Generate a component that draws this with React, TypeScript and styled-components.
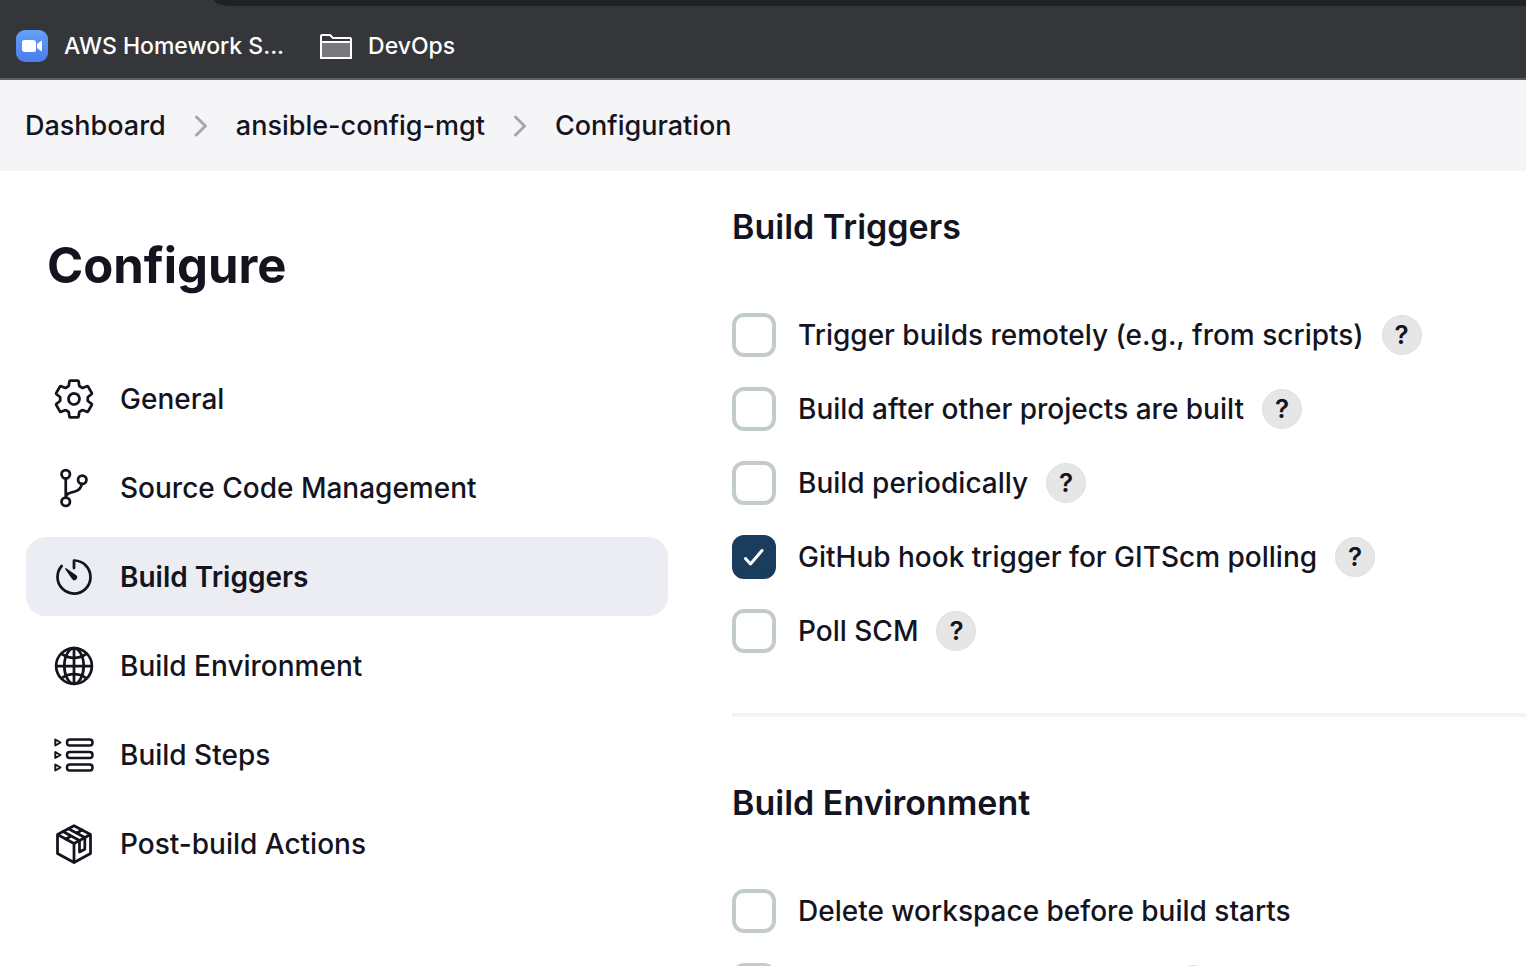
import React, { useState } from "react";
import styled, { createGlobalStyle } from "styled-components";
import { IoSettingsOutline, IoTimerOutline, IoGlobeOutline } from "react-icons/io5";

const ink = "#14141f";

const GlobalStyle = createGlobalStyle`
  *, *::before, *::after { box-sizing: border-box; }
  body {
    margin: 0;
    background: #fff;
    color: ${ink};
    font-family: Inter, "Liberation Sans", sans-serif;
    font-size: 28px;
    font-weight: 500;
    line-height: 32px;
  }
  a { color: inherit; text-decoration: none; }
`;

const Shell = styled.div`
  display: flex;
  flex-direction: column;
  height: 100vh;
  overflow: hidden;
`;

const BrowserBar = styled.header`
  flex: none;
  background: #35363a;
  border-bottom: 2px solid #5d5e62;
`;

const TabStrip = styled.div`
  height: 6px;
  margin-left: 214px;
  background: #202124;
  border-bottom-left-radius: 18px 6px;
`;

const Bookmarks = styled.nav`
  display: flex;
  align-items: center;
  gap: 36px;
  height: 72px;
  padding: 8px 16px 0;
`;

const Bookmark = styled.a`
  display: flex;
  align-items: center;
  gap: 16px;
  color: #fff;
  font-size: 23px;
  white-space: nowrap;
  svg { flex: none; }
`;

const Breadcrumbs = styled.nav`
  flex: none;
  padding: 0 25px;
  background: #f5f5f8;
  font-size: 27px;
`;

const CrumbList = styled.ol`
  display: flex;
  align-items: center;
  gap: 29px;
  height: 91px;
  margin: 0;
  padding: 0;
  list-style: none;
`;

const Crumb = styled.li`
  display: flex;
  align-items: center;
  gap: 29px;
`;

const Body = styled.div`
  flex: 1;
  display: grid;
  grid-template-columns: 668px minmax(0, 1fr);
  column-gap: 64px;
  min-height: 0;
`;

const Sidebar = styled.aside`
  padding: 64px 0 0 26px;
`;

const Title = styled.h1`
  margin: 0 0 62px 21px;
  font-size: 49px;
  font-weight: 700;
  line-height: 62px;
`;

const SideNav = styled.nav`
  display: flex;
  flex-direction: column;
  gap: 10px;
`;

const SideLink = styled.a<{ $active?: boolean }>`
  display: flex;
  align-items: center;
  gap: 24px;
  min-height: 79px;
  padding: 0 26px;
  border-radius: 20px;
  background: ${(p) => (p.$active ? "#ecedf3" : "transparent")};
  font-weight: ${(p) => (p.$active ? 600 : 500)};
  svg { flex: none; }
`;

const Main = styled.main`
  padding-top: 32px;
`;

const Section = styled.section`
  & + & {
    margin-top: 60px;
    padding-top: 62px;
    border-top: 4px solid #f3f3f7;
  }
`;

const SectionTitle = styled.h2`
  margin: 0 0 62px;
  font-size: 34px;
  font-weight: 600;
  line-height: 48px;
`;

const OptionList = styled.div`
  display: flex;
  flex-direction: column;
  gap: 30px;
`;

const Option = styled.div`
  display: flex;
  align-items: center;
  gap: 18px;
  height: 44px;
`;

const OptionLabel = styled.label`
  display: flex;
  align-items: center;
  gap: 22px;
  white-space: nowrap;
`;

const CheckCell = styled.span`
  display: grid;
  flex: none;
  & > * { grid-area: 1 / 1; }
  svg { pointer-events: none; }
`;

const Checkbox = styled.input`
  appearance: none;
  width: 44px;
  height: 44px;
  margin: 0;
  border: 4px solid #c3cbcf;
  border-radius: 12px;
  background: #fff;
  &:checked {
    border-color: #1a3d5d;
    background: #1a3d5d;
  }
`;

const HelpButton = styled.button`
  display: grid;
  place-items: center;
  width: 40px;
  height: 40px;
  padding: 0;
  border: 1px solid #e0e0e0;
  border-radius: 50%;
  background: #e6e6e6;
  color: ${ink};
  font: 600 26px/30px Inter, "Liberation Sans", sans-serif;
`;

const VideoLogo = () => (
  <svg width="32" height="32" viewBox="0 0 32 32" aria-hidden="true">
    <defs>
      <linearGradient id="video" x1="0" y1="0" x2="0" y2="1">
        <stop offset="0" stopColor="#64a0f8" />
        <stop offset="1" stopColor="#4a7cf0" />
      </linearGradient>
    </defs>
    <rect width="32" height="32" rx="9" fill="url(#video)" />
    <path d="M6 12q0-2 2-2h9q3 0 3 3v7q0 2-2 2H9q-3 0-3-3zM21 14l4-3q1-.6 1 .5v9q0 1-1 .5l-4-3z" fill="#fff" />
  </svg>
);

const FolderIcon = () => (
  <svg width="32" height="25" viewBox="0 0 32 25" aria-hidden="true">
    <path d="M2 9h28v14H2z" fill="#77787a" />
    <path d="M1 24V2q0-1 1-1h8l3 3h17q1 0 1 1v19zM1 8h30" fill="none" stroke="#fff" strokeWidth="2" />
  </svg>
);

const Chevron = () => (
  <svg width="12" height="22" viewBox="0 0 12 22" fill="none" stroke="#a5a5b5" strokeWidth="3" strokeLinecap="round" strokeLinejoin="round" aria-hidden="true">
    <path d="M1.500 2l9 9-9 9" />
  </svg>
);

const LineIcon = ({ children }: { children: React.ReactNode }) => (
  <svg width="44" height="44" viewBox="0 0 44 44" fill="none" stroke="currentColor" strokeWidth="2.75" strokeLinecap="round" strokeLinejoin="round" aria-hidden="true">
    {children}
  </svg>
);

const BranchIcon = () => (
  <LineIcon>
    <circle cx="13.75" cy="8.25" r="4.2" />
    <circle cx="13.75" cy="35.75" r="4.2" />
    <circle cx="30.25" cy="13.75" r="4.2" />
    <path d="M13.75 12.5v19M29.8 18c-.8 4.500-2.600 6.300-6.800 7.500-4.500 1.300-9.250 1.800-9.250 6" />
  </LineIcon>
);

const StepsIcon = () => (
  <LineIcon>
    {[9.5, 22, 34.5].map((y) => (
      <g key={y} strokeWidth="2.500">
        <path d={`M3.300 ${y - 3}v6l5.200-3z`} strokeWidth="2" />
        <rect x="15" y={y - 3} width="25.500" height="6" rx="2.800" />
      </g>
    ))}
  </LineIcon>
);

const PackageIcon = () => (
  <LineIcon>
    <path d="M22 3.700 38.500 12.500v19L22 40.500 5.500 31.500v-19zM5.500 12.500 22 21.500l16.500-9M22 21.500v19" />
    <path d="M11 9.500l16.500 9v11.500l5.300-2.800V15.500L16.500 6.700M13.750 17l5.500-3M24.750 11l5.500-3" />
  </LineIcon>
);

const navItems = [
  { label: "General", icon: <IoSettingsOutline size={44} /> },
  { label: "Source Code Management", icon: <BranchIcon /> },
  { label: "Build Triggers", icon: <IoTimerOutline size={44} />, active: true },
  { label: "Build Environment", icon: <IoGlobeOutline size={44} /> },
  { label: "Build Steps", icon: <StepsIcon /> },
  { label: "Post-build Actions", icon: <PackageIcon /> },
];

type OptionData = { label: string; checked?: boolean; help?: boolean };

const sections: { title: string; options: OptionData[] }[] = [
  {
    title: "Build Triggers",
    options: [
      { label: "Trigger builds remotely (e.g., from scripts)", help: true },
      { label: "Build after other projects are built", help: true },
      { label: "Build periodically", help: true },
      { label: "GitHub hook trigger for GITScm polling", checked: true, help: true },
      { label: "Poll SCM", help: true },
    ],
  },
  {
    title: "Build Environment",
    options: [
      { label: "Delete workspace before build starts" },
      { label: "Use secret text(s) or file(s)", help: true },
    ],
  },
];

const OptionRow = ({ label, checked = false, help }: OptionData) => {
  const [on, setOn] = useState(checked);
  return (
    <Option>
      <OptionLabel>
        <CheckCell>
          <Checkbox type="checkbox" checked={on} onChange={(e) => setOn(e.target.checked)} />
          {on && (
            <svg width="44" height="44" viewBox="0 0 44 44" fill="none" stroke="#fff" strokeWidth="3" strokeLinecap="round" strokeLinejoin="round" aria-hidden="true">
              <path d="M13.500 23.500l5 5.500 11.500-13.500" />
            </svg>
          )}
        </CheckCell>
        {label}
      </OptionLabel>
      {help && <HelpButton type="button" aria-label={`Help for ${label}`}>?</HelpButton>}
    </Option>
  );
};

export default function App() {
  return (
    <Shell>
      <GlobalStyle />
      <BrowserBar>
        <TabStrip />
        <Bookmarks aria-label="Bookmarks">
          <Bookmark href="#aws"><VideoLogo />AWS Homework S...</Bookmark>
          <Bookmark href="#devops"><FolderIcon />DevOps</Bookmark>
        </Bookmarks>
      </BrowserBar>
      <Breadcrumbs aria-label="Breadcrumb">
        <CrumbList>
          <Crumb><a href="#dashboard">Dashboard</a><Chevron /></Crumb>
          <Crumb><a href="#project">ansible-config-mgt</a><Chevron /></Crumb>
          <Crumb><a href="#configuration">Configuration</a></Crumb>
        </CrumbList>
      </Breadcrumbs>
      <Body>
        <Sidebar>
          <Title>Configure</Title>
          <SideNav aria-label="Configure">
            {navItems.map((item) => (
              <SideLink key={item.label} href="#" $active={item.active}>
                {item.icon}
                {item.label}
              </SideLink>
            ))}
          </SideNav>
        </Sidebar>
        <Main>
          {sections.map((section) => (
            <Section key={section.title}>
              <SectionTitle>{section.title}</SectionTitle>
              <OptionList>
                {section.options.map((option) => (
                  <OptionRow key={option.label} {...option} />
                ))}
              </OptionList>
            </Section>
          ))}
        </Main>
      </Body>
    </Shell>
  );
}
